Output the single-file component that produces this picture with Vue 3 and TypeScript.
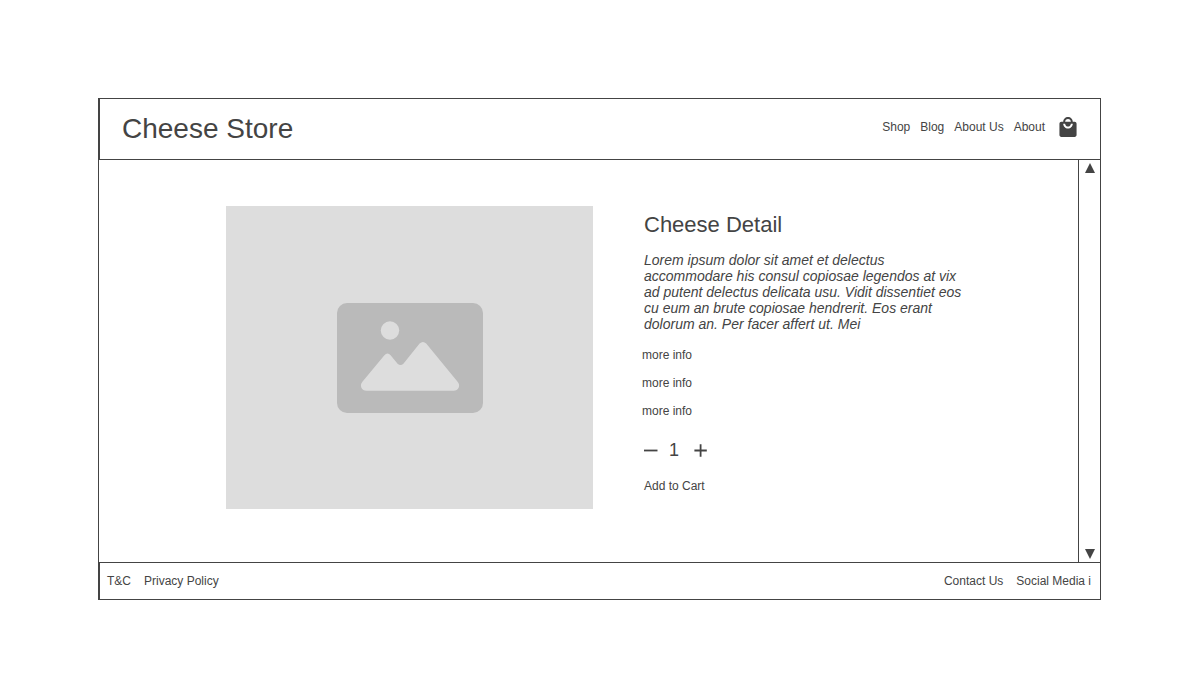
<script setup lang="ts">
import { ref } from 'vue'

const navLinks = ['Shop', 'Blog', 'About Us', 'About']
const infoLinks = ['more info', 'more info', 'more info']
const quantity = ref<number>(1)

function decrease(): void {
  if (quantity.value > 1) quantity.value--
}

function increase(): void {
  quantity.value++
}
</script>

<template>
  <div class="page">
    <div class="window">
      <header class="header">
        <h1 class="brand">Cheese Store</h1>
        <nav class="nav" aria-label="Main">
          <a v-for="link in navLinks" :key="link" href="#">{{ link }}</a>
          <button class="bag" type="button" aria-label="Shopping bag">
            <svg width="18" height="20" viewBox="3 1 18 21" aria-hidden="true">
              <path
                d="M19 6h-2c0-2.76-2.24-5-5-5S7 3.24 7 6H5c-1.1 0-2 .9-2 2v12c0 1.1.9 2 2 2h14c1.1 0 2-.9 2-2V8c0-1.1-.9-2-2-2zm-7-3c1.66 0 3 1.34 3 3H9c0-1.66 1.34-3 3-3zm0 10c-2.76 0-5-2.24-5-5h2c0 1.66 1.34 3 3 3s3-1.34 3-3h2c0 2.76-2.24 5-5 5z"
                fill="#444"
              />
            </svg>
          </button>
        </nav>
      </header>

      <div class="body">
        <main class="product">
          <div class="photo">
            <svg viewBox="0 0 146 110" role="img" aria-label="Product photo">
              <rect width="146" height="110" rx="10" fill="#bababa" />
              <circle cx="53" cy="27.5" r="9.2" fill="#ddd" />
              <path
                d="M25.4 78.8L47.4 52.2Q50.5 49 53.6 52.2L60.6 60.8Q63.5 63.4 66.4 60.8L82.6 40.6Q86 37.4 89.2 40.6L120.6 78.8C124 82.8 121.4 87.8 116.6 87.8H29.6C24.6 87.8 22.2 82.8 25.4 78.8Z"
                fill="#ddd"
              />
            </svg>
          </div>
          <section class="details">
            <h2>Cheese Detail</h2>
            <p>
              Lorem ipsum dolor sit amet et delectus accommodare his consul copiosae legendos at vix
              ad putent delectus delicata usu. Vidit dissentiet eos cu eum an brute copiosae
              hendrerit. Eos erant dolorum an. Per facer affert ut. Mei
            </p>
            <ul class="info">
              <li v-for="(item, i) in infoLinks" :key="i"><a href="#">{{ item }}</a></li>
            </ul>
            <div class="stepper">
              <button type="button" aria-label="Decrease quantity" @click="decrease">
                <svg width="14" height="14" viewBox="0 0 14 14" aria-hidden="true">
                  <path d="M0 7.5h13.5" stroke="#444" stroke-width="1.8" />
                </svg>
              </button>
              <output>{{ quantity }}</output>
              <button type="button" aria-label="Increase quantity" @click="increase">
                <svg width="14" height="14" viewBox="0 0 14 14" aria-hidden="true">
                  <path d="M.4 7.5h12.4M6.6 1.3v12.4" stroke="#444" stroke-width="1.8" />
                </svg>
              </button>
            </div>
            <button class="add" type="button">Add to Cart</button>
          </section>
        </main>
        <div class="scrollbar">
          <button type="button" aria-label="Scroll up">
            <svg width="10" height="10" viewBox="0 0 10 10" aria-hidden="true">
              <path d="M5 0l5 10H0z" fill="#444" />
            </svg>
          </button>
          <button type="button" aria-label="Scroll down">
            <svg width="10" height="10" viewBox="0 0 10 10" aria-hidden="true">
              <path d="M0 0h10L5 10z" fill="#444" />
            </svg>
          </button>
        </div>
      </div>

      <footer class="footer">
        <nav class="links" aria-label="Legal">
          <a href="#">T&amp;C</a>
          <a href="#">Privacy Policy</a>
        </nav>
        <nav class="links" aria-label="Contact">
          <a href="#">Contact Us</a>
          <a href="#">Social Media i</a>
        </nav>
      </footer>
    </div>
  </div>
</template>

<style>
body {
  margin: 0;
  background: #fff;
}
</style>

<style scoped>
.page {
  padding: 98px 102px 98px 98px;
  color: #444;
  font: 12px/16px "Liberation Sans", Arial, sans-serif;
}

.window {
  border: 1px solid #444;
}

a {
  color: inherit;
  text-decoration: none;
}

button {
  display: block;
  padding: 0;
  border: 0;
  background: none;
  color: inherit;
  font: inherit;
  cursor: pointer;
}

svg {
  display: block;
}

.header {
  display: flex;
  align-items: center;
  justify-content: space-between;
  min-height: 60px;
  padding: 0 23px 0 22px;
  border-bottom: 1px solid #444;
  border-left: 1px solid #444;
}

.brand {
  margin: 0;
  font-size: 28px;
  font-weight: 400;
  line-height: 32px;
}

.nav {
  display: flex;
  align-items: center;
  gap: 10px;
  padding-bottom: 4px;
}

.bag {
  margin-left: 4px;
}

.body {
  display: flex;
}

.product {
  display: flex;
  flex: 1;
  gap: 51px;
  min-width: 0;
  padding: 46px 105px 53px 127px;
}

.photo {
  display: flex;
  flex: 1 1 0;
  align-items: center;
  justify-content: center;
  aspect-ratio: 367 / 303;
  background: #ddd;
}

.photo svg {
  width: 146px;
  max-width: 60%;
  padding-top: 1px;
}

.details {
  flex: 0 0 329px;
}

h2 {
  margin: 6px 0 14px;
  font-size: 22px;
  font-weight: 400;
  line-height: 26px;
}

p {
  margin: 0;
  font-size: 14px;
  font-style: italic;
  line-height: 16px;
}

.info {
  display: flex;
  flex-direction: column;
  gap: 12px;
  margin: 15px 0 21px -2px;
  padding: 0;
  list-style: none;
}

.stepper {
  display: flex;
  align-items: center;
  gap: 11px;
}

.stepper output {
  min-width: 14px;
  font-size: 18px;
  line-height: 20px;
}

.add {
  margin-top: 18px;
}

.scrollbar {
  display: flex;
  flex-direction: column;
  align-items: center;
  justify-content: space-between;
  width: 21px;
  padding: 3px 0;
  border-left: 1px solid #444;
}

.footer {
  display: flex;
  align-items: center;
  justify-content: space-between;
  min-height: 36px;
  padding: 0 9px 0 7px;
  border-top: 1px solid #444;
  border-left: 1px solid #444;
}

.links {
  display: flex;
  gap: 13px;
}
</style>
